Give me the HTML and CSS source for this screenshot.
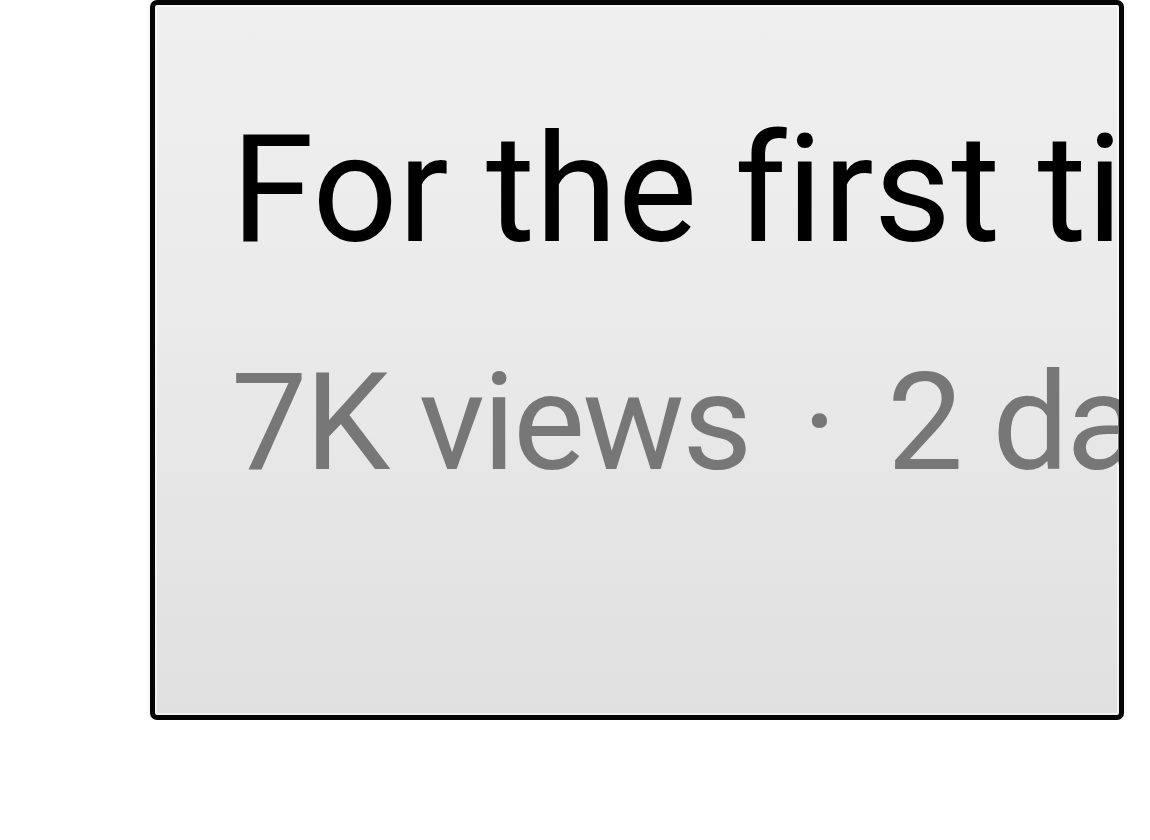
FILE: index.html
```html
<!DOCTYPE html>
<html>
<head>
    <title>Video card</title>
    <link rel="stylesheet" href="styles.css">
</head>
<body>
    <div class="card">
        <div class="title">For the first time</div>
        <div class="meta">7K views<span class="dot">·</span>2 days ago</div>
    </div>
</body>
</html>
```

FILE: styles.css
```css
body {
    margin: 0;
    background: #ffffff;
    font-family: Roboto, "Noto Sans", sans-serif;
}
.card {
    box-sizing: border-box;
    width: 974px;
    height: 720px;
    margin-left: 150px;
    padding: 110px 0 0 76px;
    border: 5px solid #050505;
    border-radius: 7px;
    background: linear-gradient(to bottom, #efefef 0%, #ebebeb 40%, #e0e0e0 100%);
    box-shadow: inset 0 0 0 2px rgba(255,255,255,0.55), 0 1px 4px rgba(0,0,0,0.08);
    overflow: hidden;
    white-space: nowrap;
    font-variant-ligatures: none;
}
.title {
    font-size: 150px;
    line-height: 1;
    color: #000000;
}
.meta {
    margin-top: 90px;
    font-size: 136px;
    line-height: 1;
    letter-spacing: -2.5px;
    color: #777777;
}
.dot {
    margin: 0 52px;
}
```
